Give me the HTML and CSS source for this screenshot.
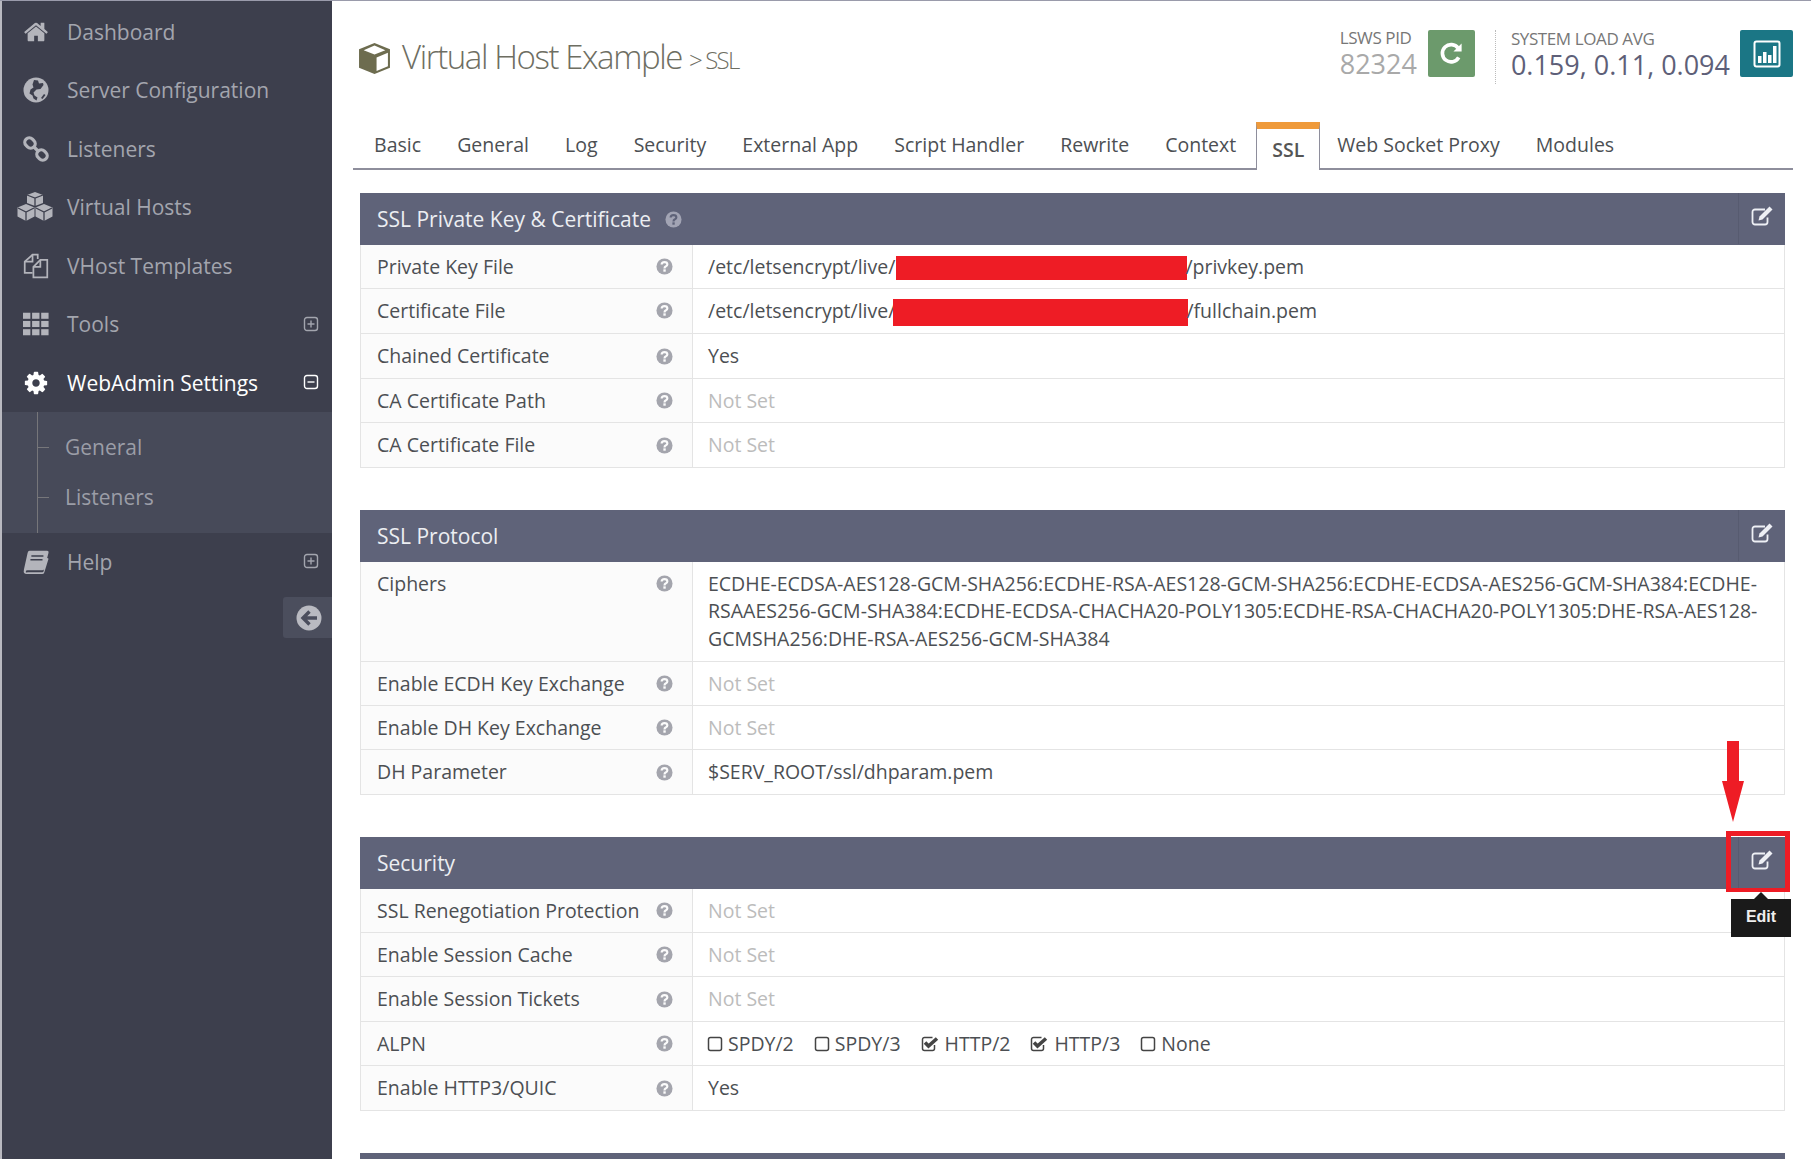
FILE: index.html
```html
<!DOCTYPE html>
<html lang="en">
<head>
<meta charset="utf-8">
<title>Virtual Host Example - SSL</title>
<link rel="stylesheet" href="styles.css">
</head>
<body>
<svg class="defs" width="0" height="0" aria-hidden="true">
  <symbol id="i-home" viewBox="0 0 1792 1792"><path fill="currentColor" d="M1472 992v480q0 26-19 45t-45 19h-384v-384h-256v384h-384q-26 0-45-19t-19-45v-480q0-1 .5-3t.5-3l575-474 575 474q1 2 1 6zm223-69l-62 74q-8 9-21 11h-3q-13 0-21-7l-692-577-692 577q-12 8-24 7-13-2-21-11l-62-74q-8-10-7-23.500t11-21.500l719-599q32-26 76-26t76 26l244 204v-195q0-14 9-23t23-9h192q14 0 23 9t9 23v408l219 182q10 8 11 21.500t-7 23.500z"/></symbol>
  <symbol id="i-globe" viewBox="0 0 26 26"><circle cx="13" cy="13" r="12.500" fill="currentColor"/><path fill="#3d3f4d" d="M11 3l4 .5 1 3 4-.5.5 2-3 4-4 .5-3 3 1 3 3 2-1 3-3-2-1-3-3-2 1-4 3-2-1-3zM21 17l1.500 1-3 4-1.500-1z"/></symbol>
  <symbol id="i-link" viewBox="0 0 26 26"><g fill="none" stroke="currentColor" stroke-width="3.200"><rect x="1.500" y="2.500" width="11" height="9" rx="4.500" transform="rotate(45 7 7)"/><rect x="13.500" y="14.500" width="11" height="9" rx="4.500" transform="rotate(45 19 19)"/><path d="M10.500 10.500l5 5"/></g></symbol>
  <symbol id="i-cubes" viewBox="0 0 36 29"><g fill="currentColor"><path d="M18 0l8 3v8l-8 3-8-3V3z"/><path d="M9 12l8.500 3.500v9L9 29 .5 24.500v-9z"/><path d="M27 12l8.500 3.500v9L27 29l-8.500-4.500v-9z"/></g><g fill="none" stroke="#3d3f4d" stroke-width="1.300"><path d="M10 3l8 3 8-3M18 6v8M1 16l8 4 8-4M9 20v9M19 16l8 4 8-4M27 20v9"/></g></symbol>
  <symbol id="i-files" viewBox="0 0 30 30"><g fill="none" stroke="currentColor" stroke-width="2"><path d="M17 7V2h-6L2 10v13h9"/><path d="M11 2v8H2"/><path d="M20 8h8v20H12V16z"/><path d="M20 8v8h-8"/></g></symbol>
  <symbol id="i-th" viewBox="0 0 30 26"><g fill="currentColor"><rect x="0" y="0" width="8.500" height="7"/><rect x="10.500" y="0" width="8.500" height="7"/><rect x="21" y="0" width="8.500" height="7"/><rect x="0" y="9.500" width="8.500" height="7"/><rect x="10.500" y="9.500" width="8.500" height="7"/><rect x="21" y="9.500" width="8.500" height="7"/><rect x="0" y="19" width="8.500" height="7"/><rect x="10.500" y="19" width="8.500" height="7"/><rect x="21" y="19" width="8.500" height="7"/></g></symbol>
  <symbol id="i-cog" viewBox="0 0 1792 1792"><path fill="currentColor" d="M1152 896q0-106-75-181t-181-75-181 75-75 181 75 181 181 75 181-75 75-181zm512-109v222q0 12-8 23t-20 13l-185 28q-19 54-39 91 35 50 107 138 10 12 10 25t-9 23q-27 37-99 108t-94 71q-12 0-26-9l-138-108q-44 23-91 38-16 136-29 186-7 28-36 28h-222q-14 0-24.500-8.500t-11.500-21.500l-28-184q-49-16-90-37l-141 107q-10 9-25 9-14 0-25-11-126-114-165-168-7-10-7-23 0-12 8-23 15-21 51-66.500t54-70.500q-27-50-41-99l-183-27q-13-2-21-12.500t-8-23.500v-222q0-12 8-23t19-13l186-28q14-46 39-92-40-57-107-138-10-12-10-24 0-10 9-23 26-36 98.500-107.500t94.500-71.500q13 0 26 10l138 107q44-23 91-38 16-136 29-186 7-28 36-28h222q14 0 24.500 8.500t11.500 21.500l28 184q49 16 90 37l142-107q9-9 24-9 13 0 25 10 129 119 165 170 7 8 7 22 0 12-8 23-15 21-51 66.500t-54 70.500q26 50 41 98l183 28q13 2 21 12.500t8 23.500z"/></symbol>
  <symbol id="i-book" viewBox="0 0 28 26"><path fill="currentColor" d="M7 1h19q2 0 1.500 2L23 20q-.5 2-2.500 2H5q-2 0-2 1.500T5 24h16l1-.5 4-15 1.500 1L23 24q-.5 2-2.500 2H4q-4 0-3-5L5 3q.5-2 2-2z"/><path stroke="#3d3f4d" stroke-width="1.500" d="M9 6.500h13M8 10.500h13"/></symbol>
  <symbol id="i-plus" viewBox="0 0 16 16"><g fill="none" stroke="currentColor" stroke-width="1.400"><rect x="1.500" y="1.500" width="13" height="13" rx="2.500"/><path d="M4.500 8h7M8 4.500v7"/></g></symbol>
  <symbol id="i-minus" viewBox="0 0 16 16"><g fill="none" stroke="currentColor" stroke-width="1.400"><rect x="1.500" y="1.500" width="13" height="13" rx="2.500"/><path d="M4.500 8h7"/></g></symbol>
  <symbol id="i-back" viewBox="0 0 26 26"><circle cx="13" cy="13" r="12.500" fill="currentColor"/><path fill="none" stroke="#4b4e5d" stroke-width="3.400" d="M21 13H8M13.500 6.500L7 13l6.500 6.500"/></symbol>
  <symbol id="i-cube" viewBox="0 0 32 32"><path fill="#6d6c4f" d="M16 1l15 6v18l-15 6-15-6V7z"/><path fill="#fff" d="M16 3.500L26.500 8 16 12.200 5.500 8zM18 15l11-4.500v13L18 28z"/></symbol>
  <symbol id="i-refresh" viewBox="0 0 26 26"><path fill="none" stroke="currentColor" stroke-width="3.800" d="M20.500 17a9 9 0 1 1-.6-9.500"/><path fill="currentColor" d="M23.500 2.500V11h-8.500z"/></symbol>
  <symbol id="i-chart" viewBox="0 0 28 28"><rect x="1.500" y="1.500" width="25" height="25" rx="2" fill="none" stroke="currentColor" stroke-width="2"/><path fill="currentColor" d="M5 16h3.500v7H5zM10 12h3.500v11H10zM15 15h3.500v8H15zM20 6h3.500v17H20z"/></symbol>
  <symbol id="i-edit" viewBox="0 0 22 20"><path fill="none" stroke="currentColor" stroke-width="1.800" d="M16.500 11.500v4.500a2.500 2.500 0 0 1-2.500 2.500H4A2.500 2.500 0 0 1 1.500 16V6A2.500 2.500 0 0 1 4 3.500h10"/><path fill="currentColor" d="M18.500 .5l3 3-10 10-4 1 1-4z"/></symbol>
  <symbol id="i-square" viewBox="0 0 16 16"><rect x="1.500" y="1.500" width="13" height="13" rx="2" fill="none" stroke="currentColor" stroke-width="1.500"/></symbol>
  <symbol id="i-check" viewBox="0 0 18 16"><path fill="none" stroke="currentColor" stroke-width="1.500" d="M13.500 9v3.500a2 2 0 0 1-2 2h-8a2 2 0 0 1-2-2v-9a2 2 0 0 1 2-2h8"/><path fill="none" stroke="currentColor" stroke-width="3.600" d="M4 6.500l3.500 3.500L16 2.500"/></symbol>
  <symbol id="i-q" viewBox="0 0 18 18"><circle cx="9" cy="9" r="8.500" fill="currentColor"/><path fill="none" stroke="var(--cut)" stroke-width="2.300" d="M6 7q0-2.700 3-2.700T12 6.800Q12 8 10.500 8.800 9 9.500 9 11"/><rect x="7.800" y="12" width="2.500" height="2.500" fill="var(--cut)"/></symbol>
</svg>

<div class="page">
  <aside class="sidebar">
    <nav class="menu">
      <a class="item"><svg class="mi"><use href="#i-home"/></svg><span>Dashboard</span></a>
      <a class="item"><svg class="mi"><use href="#i-globe"/></svg><span>Server Configuration</span></a>
      <a class="item"><svg class="mi"><use href="#i-link"/></svg><span>Listeners</span></a>
      <a class="item"><svg class="mi mi-wide"><use href="#i-cubes"/></svg><span>Virtual Hosts</span></a>
      <a class="item"><svg class="mi"><use href="#i-files"/></svg><span>VHost Templates</span></a>
      <a class="item"><svg class="mi"><use href="#i-th"/></svg><span>Tools</span><svg class="tog"><use href="#i-plus"/></svg></a>
      <a class="item active"><svg class="mi"><use href="#i-cog"/></svg><span>WebAdmin Settings</span><svg class="tog"><use href="#i-minus"/></svg></a>
      <div class="sub">
        <a class="sub-item">General</a>
        <a class="sub-item">Listeners</a>
      </div>
      <a class="item"><svg class="mi"><use href="#i-book"/></svg><span>Help</span><svg class="tog"><use href="#i-plus"/></svg></a>
    </nav>
    <button class="collapse" type="button"><svg class="back"><use href="#i-back"/></svg></button>
  </aside>

  <main class="main">
    <header class="top">
      <div class="title">
        <svg class="cube"><use href="#i-cube"/></svg>
        <h1>Virtual Host Example</h1>
        <span class="crumb">&gt; SSL</span>
      </div>
      <div class="stats">
        <div class="stat stat-pid"><div class="stat-label">LSWS PID</div><div class="stat-value">82324</div></div>
        <div class="btn btn-green"><svg class="btn-ico-r"><use href="#i-refresh"/></svg></div>
        <div class="stat stat-load"><div class="stat-label">SYSTEM LOAD AVG</div><div class="stat-value">0.159, 0.11, 0.094</div></div>
        <div class="btn btn-teal"><svg class="btn-ico-c"><use href="#i-chart"/></svg></div>
      </div>
    </header>

    <div class="tabs">
      <a class="tab">Basic</a><a class="tab">General</a><a class="tab">Log</a><a class="tab">Security</a><a class="tab">External App</a><a class="tab">Script Handler</a><a class="tab">Rewrite</a><a class="tab">Context</a><a class="tab tab-on">SSL</a><a class="tab">Web Socket Proxy</a><a class="tab">Modules</a>
    </div>

    <section class="card">
      <div class="head"><span class="head-title">SSL Private Key &amp; Certificate</span><svg class="q q-head"><use href="#i-q"/></svg><span class="head-edit"><svg class="edit"><use href="#i-edit"/></svg></span></div>
      <div class="row"><div class="lab"><span>Private Key File</span><svg class="q"><use href="#i-q"/></svg></div><div class="val">/etc/letsencrypt/live/<span class="redact r1"></span>/privkey.pem</div></div>
      <div class="row"><div class="lab"><span>Certificate File</span><svg class="q"><use href="#i-q"/></svg></div><div class="val">/etc/letsencrypt/live/<span class="redact r2"></span>/fullchain.pem</div></div>
      <div class="row"><div class="lab"><span>Chained Certificate</span><svg class="q"><use href="#i-q"/></svg></div><div class="val">Yes</div></div>
      <div class="row"><div class="lab"><span>CA Certificate Path</span><svg class="q"><use href="#i-q"/></svg></div><div class="val unset">Not Set</div></div>
      <div class="row"><div class="lab"><span>CA Certificate File</span><svg class="q"><use href="#i-q"/></svg></div><div class="val unset">Not Set</div></div>
    </section>

    <section class="card">
      <div class="head"><span class="head-title">SSL Protocol</span><span class="head-edit"><svg class="edit"><use href="#i-edit"/></svg></span></div>
      <div class="row"><div class="lab"><span>Ciphers</span><svg class="q"><use href="#i-q"/></svg></div><div class="val">ECDHE-ECDSA-AES128-GCM-SHA256:ECDHE-RSA-AES128-GCM-SHA256:ECDHE-ECDSA-AES256-GCM-SHA384:ECDHE-RSAAES256-GCM-SHA384:ECDHE-ECDSA-CHACHA20-POLY1305:ECDHE-RSA-CHACHA20-POLY1305:DHE-RSA-AES128-GCMSHA256:DHE-RSA-AES256-GCM-SHA384</div></div>
      <div class="row"><div class="lab"><span>Enable ECDH Key Exchange</span><svg class="q"><use href="#i-q"/></svg></div><div class="val unset">Not Set</div></div>
      <div class="row"><div class="lab"><span>Enable DH Key Exchange</span><svg class="q"><use href="#i-q"/></svg></div><div class="val unset">Not Set</div></div>
      <div class="row"><div class="lab"><span>DH Parameter</span><svg class="q"><use href="#i-q"/></svg></div><div class="val">$SERV_ROOT/ssl/dhparam.pem</div></div>
    </section>

    <section class="card">
      <div class="head"><span class="head-title">Security</span><span class="head-edit"><svg class="edit"><use href="#i-edit"/></svg></span></div>
      <div class="row"><div class="lab"><span>SSL Renegotiation Protection</span><svg class="q"><use href="#i-q"/></svg></div><div class="val unset">Not Set</div></div>
      <div class="row"><div class="lab"><span>Enable Session Cache</span><svg class="q"><use href="#i-q"/></svg></div><div class="val unset">Not Set</div></div>
      <div class="row"><div class="lab"><span>Enable Session Tickets</span><svg class="q"><use href="#i-q"/></svg></div><div class="val unset">Not Set</div></div>
      <div class="row"><div class="lab"><span>ALPN</span><svg class="q"><use href="#i-q"/></svg></div>
        <div class="val opts">
          <span class="opt"><svg class="box"><use href="#i-square"/></svg>SPDY/2</span>
          <span class="opt"><svg class="box"><use href="#i-square"/></svg>SPDY/3</span>
          <span class="opt"><svg class="box box-on"><use href="#i-check"/></svg>HTTP/2</span>
          <span class="opt"><svg class="box box-on"><use href="#i-check"/></svg>HTTP/3</span>
          <span class="opt"><svg class="box"><use href="#i-square"/></svg>None</span>
        </div>
      </div>
      <div class="row"><div class="lab"><span>Enable HTTP3/QUIC</span><svg class="q"><use href="#i-q"/></svg></div><div class="val">Yes</div></div>
    </section>

    <section class="card"><div class="head"></div></section>
  </main>
</div>

<svg class="arrow" viewBox="0 0 22 81" aria-hidden="true"><path fill="#ee1c25" d="M5 0h12v40h5L11 81 0 40h5z"/></svg>
<div class="callout"></div>
<div class="tip">Edit</div>
</body>
</html>
```
FILE: styles.css
```css
* { box-sizing: border-box; }
html, body { margin: 0; height: 1159px; overflow: hidden; background: #fff; }
body { font-family: "Open Sans", "Liberation Sans", sans-serif; color: #4c4f53; position: relative; }
.defs { position: absolute; }

.page { display: flex; height: 1159px; border-top: 1px solid #9a9bab; }

/* sidebar */
.sidebar { width: 332px; flex: none; background: #3d3f4d; border-left: 2px solid #b9b9c0; padding-top: 1.500px; display: flex; flex-direction: column; }
.item { height: 58.500px; display: flex; align-items: center; position: relative; padding-left: 65px; font-size: 21px; color: #a3a5ae; }
.item.active { color: #fff; }
.mi { position: absolute; left: 21px; top: 16px; width: 26px; height: 26px; color: #b3b4bb; }
.mi-wide { left: 15px; width: 36px; height: 29px; top: 14px; }
.item.active .mi { color: #fff; }
.tog { position: absolute; left: 301px; top: 20.500px; width: 16px; height: 16px; color: #a3a5ae; }
.item.active .tog { color: #fff; }
.sub { background: #474a59; padding: 9.500px 0 11px; position: relative; }
.sub::before { content: ""; position: absolute; left: 34.500px; top: 0; bottom: 0; width: 1px; background: #76767a; }
.sub-item { display: flex; align-items: center; height: 50px; padding-left: 63px; font-size: 21px; color: #9b9da7; position: relative; }
.sub-item::before { content: ""; position: absolute; left: 35px; top: 25px; width: 12px; height: 1px; background: #76767a; }
.collapse { align-self: flex-end; margin-top: 6px; width: 49px; height: 41px; border: 0; padding: 0 0 0 2px; background: #4b4e5d; border-radius: 3px 0 0 3px; display: flex; align-items: center; justify-content: center; }
.back { width: 26px; height: 26px; color: #b9bac1; }

/* main */
.main { flex: 1; min-width: 0; padding: 0 18px 0 21px; }
.top { height: 121px; display: flex; justify-content: space-between; }
.title { display: flex; align-items: baseline; padding-top: 34px; padding-left: 5px; color: #6e6e62; }
.cube { width: 33px; height: 33px; align-self: flex-start; margin-top: 7px; margin-right: 11px; }
.title h1 { margin: 0; font-size: 33px; font-weight: 300; letter-spacing: -1.400px; line-height: 44px; }
.crumb { font-size: 24px; font-weight: 300; letter-spacing: -1.800px; margin-left: 7px; }
.stats { display: flex; align-items: flex-start; padding-top: 28px; }
.stat-label { font-size: 17px; line-height: 18px; letter-spacing: -.4px; color: #777; white-space: nowrap; }
.stat-value { font-size: 27px; line-height: 34px; white-space: nowrap; color: #5e5f78; }
.stat-pid .stat-value { color: #a9a9a9; }
.stat-pid { margin-right: 11px; }
.btn { height: 47px; margin-top: 1px; border-radius: 2px; display: flex; align-items: center; justify-content: center; color: #fff; flex: none; }
.btn-green { width: 47px; background: #6c9a6c; }
.btn-teal { width: 53px; background: #1b7685; margin-left: 10px; }
.btn-ico-r { width: 25px; height: 25px; }
.btn-ico-c { width: 28px; height: 28px; }
.stat-load { margin: 1px 0 0 20px; padding-left: 15px; border-left: 1px dotted #bbb; height: 54px; }

.tabs { display: flex; height: 48px; border-bottom: 2px solid #8e8e9c; padding-left: 2px; }
.tab { font-size: 19.500px; color: #4c4f53; padding: 10px 18px 0 19.100px; margin-right: -1px; line-height: 25px; white-space: nowrap; }
.tab-on { height: 48px; border: 1px solid #8e8e9c; border-bottom: 0; border-top: 7px solid #ef9a3a; background: #fff; font-weight: 600; padding: 6px 15px 0 15px; margin: 0 -2px 0 3px; color: #555; line-height: 30px; }

/* cards */
.card { margin: 23px 8px 0 7px; }
.card + .card { margin-top: 42.400px; }
.head { height: 51.500px; background: #5f6379; color: #eceef2; display: flex; align-items: center; padding-left: 17px; position: relative; --cut: #5f6379; font-size: 21px; }
.head-edit { position: absolute; right: 0; top: 0; bottom: 1px; width: 47px; border-left: 1px solid #575b70; display: flex; align-items: center; justify-content: center; padding-bottom: 5px; }
.edit { width: 22px; height: 20px; color: #eef0f5; }
.row { display: flex; border: solid #e4e4e4; border-width: 0 1px 1px; color: #4c4f53; font-size: 19.500px; line-height: 27.800px; }
.lab { width: 332px; flex: none; background: #fbfbfb; border-right: 1px solid #e4e4e4; padding: 8px 19px 7.600px 16px; display: flex; justify-content: space-between; align-items: flex-start; --cut: #fbfbfb; white-space: nowrap; }
.val { flex: 1; min-width: 0; padding: 8px 15px 7.600px; overflow-wrap: anywhere; }
.unset { color: #bcbcbc; }
.q { width: 17px; height: 17px; flex: none; margin-top: 5.500px; color: #a4a5ad; }
.q-head { margin: 2px 0 0 14px; color: #a2a4b4; }
.redact { display: inline-block; height: 24px; vertical-align: -6px; background: #ee1c25; }
.r1 { width: 291px; margin-left: 1px; margin-right: -2px; }
.r2 { width: 295px; height: 27px; vertical-align: -8px; margin-left: -2px; margin-right: -2px; }
.opts { display: flex; }
.opt { display: flex; align-items: center; margin-right: 21px; }
.box { width: 16px; height: 16px; margin-right: 5px; margin-left: -1px; color: #444; }
.box-on { width: 18px; margin-right: 6px; }

/* overlays */
.arrow { position: absolute; left: 1722px; top: 741px; width: 22px; height: 81px; }
.callout { position: absolute; left: 1726px; top: 831px; width: 64px; height: 61px; border: 5px solid #ee1c25; border-bottom-width: 4px; }
.tip { position: absolute; left: 1731px; top: 899px; width: 60px; height: 38px; padding-bottom: 3px; background: #1a1a1a; color: #eee; font-family: "Liberation Sans", sans-serif; font-size: 16px; font-weight: 700; display: flex; align-items: center; justify-content: center; }
.tip::before { content: ""; position: absolute; left: 23px; top: -7px; border: solid transparent; border-width: 0 7px 7px; border-bottom-color: #1a1a1a; }
```
